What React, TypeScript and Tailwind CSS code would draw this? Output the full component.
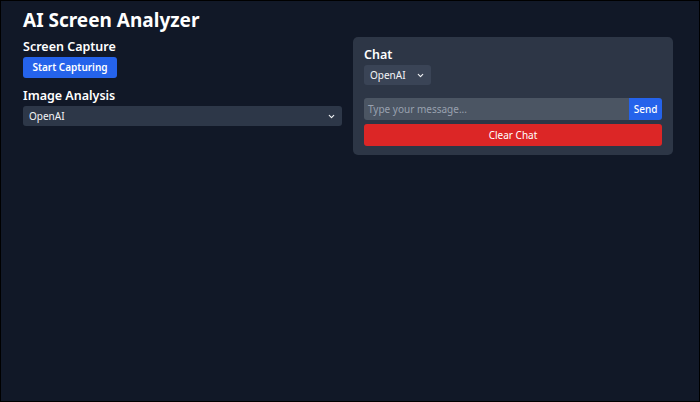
import { ChevronDown } from "lucide-react";

function Select({ className = "" }: { className?: string }) {
  return (
    <div className={`flex items-center justify-between rounded-[3px] px-[6px] text-[10px] text-gray-100 ${className}`}>
      <span>OpenAI</span>
      <ChevronDown className="h-[9px] w-[9px]" strokeWidth={3} />
    </div>
  );
}

export default function App() {
  return (
    <div className="h-[402px] w-[700px] overflow-hidden border border-black bg-[#111827] font-['Noto_Sans',sans-serif] text-white">
      <div className="px-[22px] pt-[5px]">
        <h1 className="text-[19px] font-bold leading-[28px]">AI Screen Analyzer</h1>
        <div className="mt-[3px] grid grid-cols-[319px_320px] gap-[11px]">
          <div className="flex flex-col">
            <h2 className="pt-[2px] text-[12.5px] font-semibold leading-[16px]">Screen Capture</h2>
            <button className="mt-[2px] h-[21px] w-[94px] rounded-[3px] bg-[#2563eb] text-[10px] font-semibold">
              Start Capturing
            </button>
            <h2 className="mt-[10px] text-[12.5px] font-semibold leading-[16px]">Image Analysis</h2>
            <Select className="mt-[2px] h-[20px] bg-[#2d3748]" />
          </div>
          <div className="rounded-[5px] bg-[#2d3646] px-[11px] pt-[9px] pb-[9px]">
            <h2 className="text-[12.5px] font-semibold leading-[18px]">Chat</h2>
            <Select className="mt-[1px] h-[20px] w-[67px] bg-[#3a4456]" />
            <div className="mt-[13px] flex h-[22px]">
              <div className="flex flex-1 items-center rounded-l-[3px] bg-[#4b5563] px-[4px] text-[10px] text-gray-400">
                Type your message...
              </div>
              <button className="w-[33px] rounded-r-[3px] bg-[#2563eb] text-[10px] font-medium">Send</button>
            </div>
            <button className="mt-[4px] h-[22px] w-full rounded-[3px] bg-[#dc2626] text-[10px]">Clear Chat</button>
          </div>
        </div>
      </div>
    </div>
  );
}
